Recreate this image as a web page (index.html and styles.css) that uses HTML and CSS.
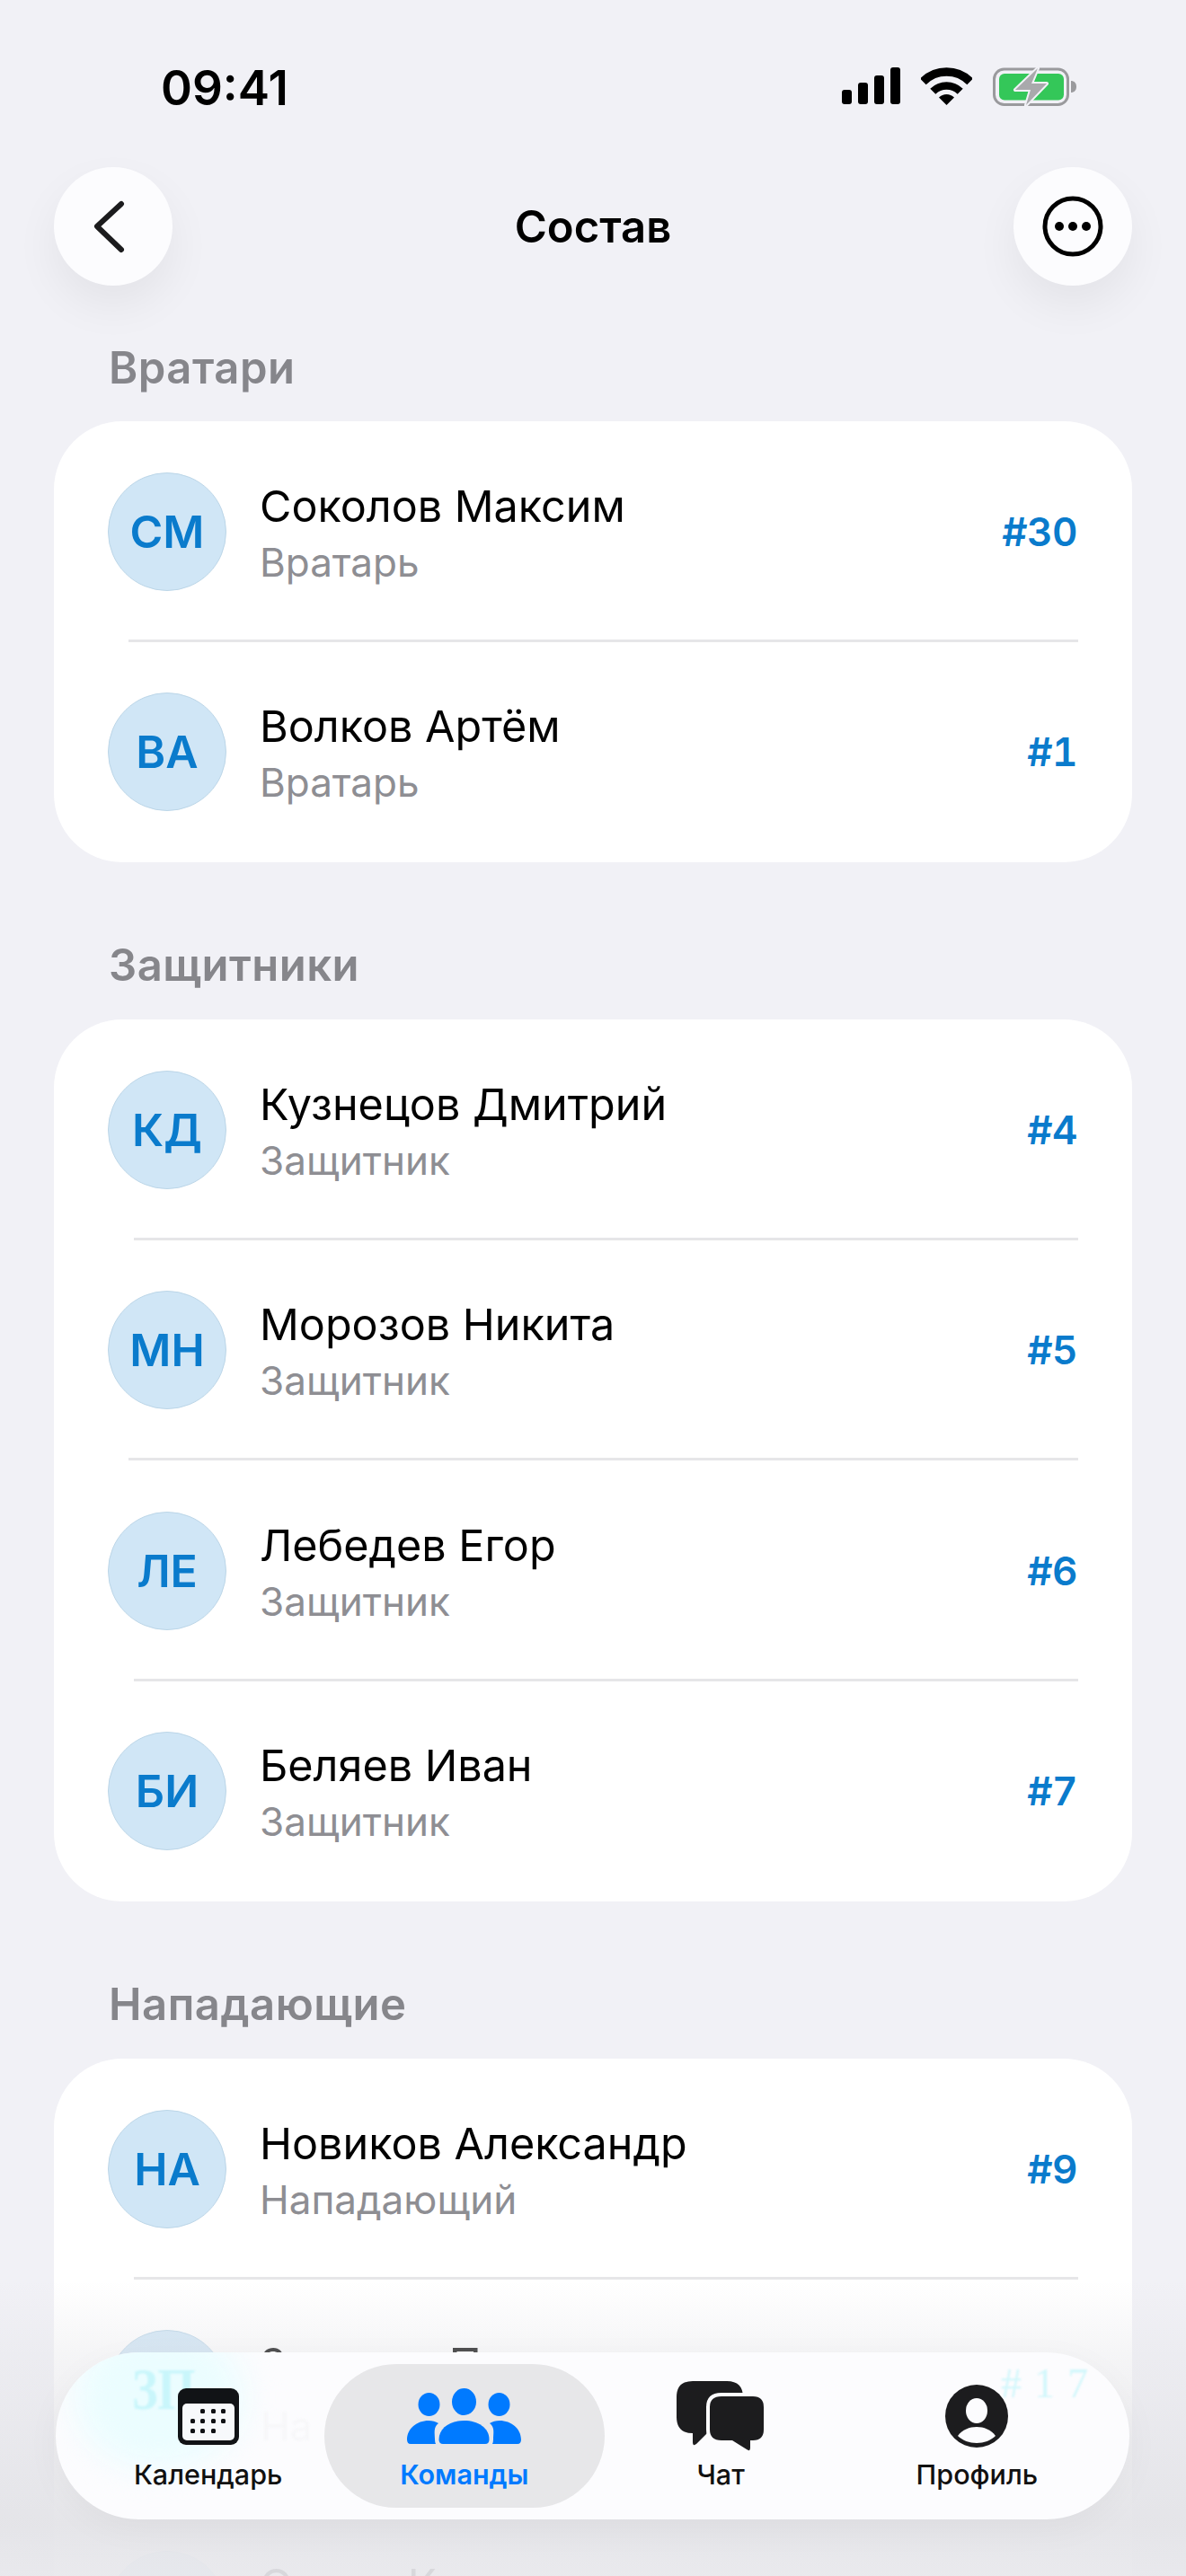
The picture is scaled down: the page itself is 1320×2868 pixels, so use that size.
FILE: index.html
```html
<!DOCTYPE html>
<html lang="ru">
<head>
    <meta charset="UTF-8">
    <meta name="viewport" content="width=device-width, initial-scale=1.0">
    <title>Состав</title>
    <link rel="stylesheet" href="styles.css">
</head>
<body>
    <div class="screen">
        <div class="status-bar">
            <span class="status-time">09:41</span>
            <div class="status-icons">
                <svg width="65" height="41" viewBox="0 0 65 41">
                    <rect x="0" y="25" width="11" height="16" rx="3"/>
                    <rect x="18" y="17" width="11" height="24" rx="3"/>
                    <rect x="36" y="9" width="11" height="32" rx="3"/>
                    <rect x="54" y="0" width="11" height="41" rx="3"/>
                </svg>
                <svg width="57" height="42" viewBox="0 0 57 42">
                    <path d="M2.3 15.8A37 37 0 0 1 54.7 15.8" fill="none" stroke="#000" stroke-width="9.5"/>
                    <path d="M13.3 26.8A21.5 21.5 0 0 1 43.7 26.8" fill="none" stroke="#000" stroke-width="8.5"/>
                    <path d="M28.5 42L20 33.5A12 12 0 0 1 37 33.5Z"/>
                </svg>
                <svg width="93" height="43" viewBox="0 0 93 43">
                    <rect x="1.5" y="2" width="82" height="39.5" rx="11" fill="none" stroke="#9a9a9d" stroke-width="3"/>
                    <rect x="7" y="7" width="72" height="29.5" rx="6" fill="#34c759"/>
                    <path d="M87 15c3 0 6 2 6 6.500s-3 6.500-6 6.500z" fill="#9a9a9d"/>
                    <path d="M50 1L25 25H42L37 42L60 18H43Z" fill="#a9a9ac" stroke="#f1f1f6" stroke-width="4" paint-order="stroke" stroke-linejoin="round"/>
                </svg>
            </div>
        </div>

        <header class="nav-bar">
            <button class="round-btn">
                <svg width="132" height="132" viewBox="0 0 132 132">
                    <path d="M75 41L48 66L75 92" fill="none" stroke="#1c1c1e" stroke-width="6" stroke-linecap="round" stroke-linejoin="round"/>
                </svg>
            </button>
            <h1 class="nav-title">Состав</h1>
            <button class="round-btn">
                <svg width="132" height="132" viewBox="0 0 132 132">
                    <circle cx="66" cy="66" r="31" fill="none" stroke="#000" stroke-width="5"/>
                    <circle cx="51" cy="66" r="5"/>
                    <circle cx="66" cy="66" r="5"/>
                    <circle cx="81" cy="66" r="5"/>
                </svg>
            </button>
        </header>

        <section class="group">
            <h2 class="group-title">Вратари</h2>
            <ul class="card">
                <li class="player">
                    <span class="avatar">СМ</span>
                    <div class="player-info">
                        <span class="player-name">Соколов Максим</span>
                        <span class="player-role">Вратарь</span>
                    </div>
                    <span class="player-num">#30</span>
                </li>
                <li class="player">
                    <span class="avatar">ВА</span>
                    <div class="player-info">
                        <span class="player-name">Волков Артём</span>
                        <span class="player-role">Вратарь</span>
                    </div>
                    <span class="player-num">#1</span>
                </li>
            </ul>
        </section>

        <section class="group">
            <h2 class="group-title">Защитники</h2>
            <ul class="card">
                <li class="player inset-wide">
                    <span class="avatar">КД</span>
                    <div class="player-info">
                        <span class="player-name">Кузнецов Дмитрий</span>
                        <span class="player-role">Защитник</span>
                    </div>
                    <span class="player-num">#4</span>
                </li>
                <li class="player">
                    <span class="avatar">МН</span>
                    <div class="player-info">
                        <span class="player-name">Морозов Никита</span>
                        <span class="player-role">Защитник</span>
                    </div>
                    <span class="player-num">#5</span>
                </li>
                <li class="player inset-wide">
                    <span class="avatar">ЛЕ</span>
                    <div class="player-info">
                        <span class="player-name">Лебедев Егор</span>
                        <span class="player-role">Защитник</span>
                    </div>
                    <span class="player-num">#6</span>
                </li>
                <li class="player">
                    <span class="avatar">БИ</span>
                    <div class="player-info">
                        <span class="player-name">Беляев Иван</span>
                        <span class="player-role">Защитник</span>
                    </div>
                    <span class="player-num">#7</span>
                </li>
            </ul>
        </section>

        <section class="group">
            <h2 class="group-title">Нападающие</h2>
            <ul class="card">
                <li class="player inset-wide">
                    <span class="avatar">НА</span>
                    <div class="player-info">
                        <span class="player-name">Новиков Александр</span>
                        <span class="player-role">Нападающий</span>
                    </div>
                    <span class="player-num">#9</span>
                </li>
                <li class="player">
                    <span class="avatar">ЗП</span>
                    <div class="player-info">
                        <span class="player-name">Захаров Павел</span>
                        <span class="player-role">Нападающий</span>
                    </div>
                    <span class="player-num">#17</span>
                </li>
                <li class="player">
                    <span class="avatar">ОК</span>
                    <div class="player-info">
                        <span class="player-name">Орлов Кирилл</span>
                        <span class="player-role">Нападающий</span>
                    </div>
                    <span class="player-num">#19</span>
                </li>
            </ul>
        </section>

        <div class="bottom-fade"></div>

        <nav class="tab-bar">
            <span class="ghost ghost-avatar"></span>
            <span class="ghost ghost-initials">ЗП</span>
            <span class="ghost ghost-num">#17</span>
            <span class="ghost ghost-role">На</span>

            <a class="tab">
                <span class="tab-icon">
                    <svg width="68" height="63" viewBox="0 0 68 63">
                        <rect width="68" height="63" rx="9" fill="#111316"/>
                        <rect x="5" y="17" width="58" height="41" rx="5" fill="#f7f9fb"/>
                        <g fill="#111316">
                            <rect x="25" y="23" width="5" height="5" rx="1.500"/>
                            <rect x="37" y="23" width="5" height="5" rx="1.500"/>
                            <rect x="48" y="23" width="5" height="5" rx="1.500"/>
                            <rect x="14" y="34" width="5" height="5" rx="1.500"/>
                            <rect x="25" y="34" width="5" height="5" rx="1.500"/>
                            <rect x="37" y="34" width="5" height="5" rx="1.500"/>
                            <rect x="48" y="34" width="5" height="5" rx="1.500"/>
                            <rect x="14" y="45" width="5" height="5" rx="1.500"/>
                            <rect x="25" y="45" width="5" height="5" rx="1.500"/>
                            <rect x="37" y="45" width="5" height="5" rx="1.500"/>
                        </g>
                    </svg>
                </span>
                <span class="tab-label">Календарь</span>
            </a>
            <a class="tab active">
                <span class="tab-icon">
                    <svg width="129" height="62" viewBox="0 0 129 62" fill="#007aff">
                        <ellipse cx="25.500" cy="18" rx="12" ry="13"/>
                        <ellipse cx="64.500" cy="15" rx="13.500" ry="15"/>
                        <ellipse cx="103.500" cy="18" rx="12" ry="13"/>
                        <path d="M36.500 57C36.500 44 49 36 64.500 36C80 36 92.500 44 92.500 57Q92.500 62 88 62H41Q36.500 62 36.500 57Z"/>
                        <path d="M1 57C1 45 12 36 25 36C29 36 33 37 36 39C30 43.500 32 50 32 57Q32 60 33 62H5Q1 62 1 57Z"/>
                        <path d="M128 57C128 45 117 36 104 36C100 36 96 37 93 39C99 43.500 97 50 97 57Q97 60 96 62H124Q128 62 128 57Z"/>
                    </svg>
                </span>
                <span class="tab-label">Команды</span>
            </a>
            <a class="tab">
                <span class="tab-icon">
                    <svg width="98" height="78" viewBox="0 0 98 78" fill="#1c1c1e">
                        <path d="M18 0H56Q74 0 74 18V40Q74 58 56 58H34L22 70Q18 73 18 68V58Q0 58 0 40V18Q0 0 18 0Z"/>
                        <path d="M50 17H85Q97 17 97 29V54Q97 66 85 66H82V74Q82 79 78 76L62 66H50Q37 66 37 54V29Q37 17 50 17Z" stroke="#fcfcfe" stroke-width="8" paint-order="stroke"/>
                    </svg>
                </span>
                <span class="tab-label">Чат</span>
            </a>
            <a class="tab">
                <span class="tab-icon">
                    <svg width="70" height="70" viewBox="0 0 70 70">
                        <circle cx="35" cy="35" r="35" fill="#1c1c1e"/>
                        <ellipse cx="35" cy="29" rx="12" ry="14" fill="#fcfcfe"/>
                        <path d="M14 57C19 50 27 47 35 47C43 47 51 50 56 57C51 62 43 65 35 65C27 65 19 62 14 57Z" fill="#fcfcfe"/>
                    </svg>
                </span>
                <span class="tab-label">Профиль</span>
            </a>
        </nav>
    </div>
</body>
</html>
```

FILE: styles.css
```css
/* Base Styles */
:root {
    --bg: #f1f1f6;
    --text: #000;
    --muted: #8e8e93;
    --section: #86868b;
    --accent: #0a7bcc;
    --active: #007aff;
    --line: #e6e6e8;
}

* {
    margin: 0;
    padding: 0;
    box-sizing: border-box;
    font-family: Inter, "Noto Sans", sans-serif;
}

body {
    background-color: var(--bg);
    color: var(--text);
}

.screen {
    position: relative;
    width: 1320px;
    height: 2868px;
    overflow: hidden;
}

/* Status Bar */
.status-bar {
    height: 186px;
    display: flex;
    justify-content: space-between;
    align-items: flex-start;
    padding: 75px 122px 0 179px;
}

.status-time {
    font-size: 53px;
    line-height: 46px;
    font-weight: 600;
}

.status-icons {
    display: flex;
    align-items: flex-start;
    gap: 23px;
}

/* Nav Bar */
.nav-bar {
    display: flex;
    justify-content: space-between;
    align-items: center;
    margin: 0 60px;
}

.nav-title {
    font-size: 49px;
    line-height: 62px;
    padding-top: 2px;
    font-weight: 600;
}

.round-btn {
    width: 132px;
    height: 132px;
    border: none;
    border-radius: 50%;
    background: #fcfcfe;
    box-shadow: 0 22px 50px rgba(0, 0, 0, 0.06);
    display: flex;
}

/* Player Groups */
.group {
    margin: 62px 60px 0;
}

.group + .group {
    margin-top: 85px;
}

.group-title {
    font-size: 49px;
    line-height: 60px;
    letter-spacing: 0.5px;
    font-weight: 600;
    color: var(--section);
    padding-left: 61px;
    margin-bottom: 29px;
}

.group + .group .group-title {
    margin-bottom: 30px;
}

.card {
    list-style: none;
    background: white;
    border-radius: 76px;
}

.player {
    position: relative;
    height: 245.5px;
    display: flex;
    align-items: center;
    padding: 0 61px 0 60px;
}

/* divider sits under every row but the last */
.player:not(:last-child)::after {
    content: '';
    position: absolute;
    left: 83px;
    right: 60px;
    bottom: 0;
    height: 3px;
    background: var(--line);
}

.player.inset-wide::after {
    left: 89px;
}

.avatar {
    width: 132px;
    height: 132px;
    flex-shrink: 0;
    border-radius: 50%;
    border: 1px solid #bcd6e8;
    background: #d0e6f6;
    color: var(--accent);
    font-size: 50px;
    font-weight: 600;
    display: flex;
    align-items: center;
    justify-content: center;
}

.player-info {
    flex: 1;
    display: flex;
    flex-direction: column;
    margin-left: 37px;
    padding-top: 5px;
}

.player-name {
    font-size: 48.5px;
    line-height: 63px;
}

.player-role {
    font-size: 44px;
    line-height: 62px;
    color: var(--muted);
}

.player-num {
    font-size: 44px;
    font-weight: 600;
    font-variant-numeric: tabular-nums;
    letter-spacing: -0.5px;
    color: var(--accent);
}

/* Bottom fade under the tab bar */
.bottom-fade {
    position: absolute;
    left: 0;
    right: 0;
    bottom: 0;
    height: 328px;
    background: linear-gradient(to bottom,
        rgba(228, 228, 232, 0) 0,
        rgba(228, 228, 232, 0.37) 80px,
        rgba(228, 228, 232, 0.96) 270px,
        rgba(232, 232, 236, 0.93) 100%);
}

/* Tab Bar */
.tab-bar {
    position: absolute;
    left: 62px;
    top: 2619px;
    width: 1195px;
    height: 186px;
    padding: 13px 27px;
    display: grid;
    grid-template-columns: repeat(4, 1fr);
    background: #fcfcfe;
    border-radius: 93px;
    overflow: hidden;
    box-shadow: 0 10px 40px rgba(0, 0, 0, 0.04);
}

.tab {
    position: relative;
    display: flex;
    flex-direction: column;
    align-items: center;
    padding-top: 19px;
    border-radius: 80px;
    color: #111;
}

.tab.active {
    margin: 0 -13px;
    background: #e7e7e9;
    color: var(--active);
}

.tab-icon {
    height: 78px;
    display: flex;
    align-items: center;
}

.tab-label {
    margin-top: 8px;
    font-size: 30.5px;
    line-height: 36px;
    font-weight: 500;
}

.tab.active .tab-label {
    font-weight: 600;
}

/* refraction of the rows behind the glass */
.ghost {
    position: absolute;
    filter: blur(1px);
}

.ghost-avatar {
    left: 20px;
    top: -30px;
    width: 190px;
    height: 160px;
    border-radius: 50%;
    background: #ebfdff;
    filter: blur(18px);
}

.ghost-initials {
    left: 85px;
    top: 11px;
    font-family: "Liberation Serif", serif;
    font-size: 54px;
    line-height: 50px;
    font-weight: 700;
    color: #c9f6fb;
    transform: scaleY(1.2);
    transform-origin: top;
}

.ghost-num {
    left: 1052px;
    top: 12px;
    font-family: "Liberation Serif", serif;
    font-size: 46px;
    line-height: 46px;
    letter-spacing: 14px;
    color: #d2f7fb;
}

.ghost-role {
    left: 228px;
    top: 60px;
    font-size: 44px;
    line-height: 44px;
    color: #f7f7f9;
}
```
